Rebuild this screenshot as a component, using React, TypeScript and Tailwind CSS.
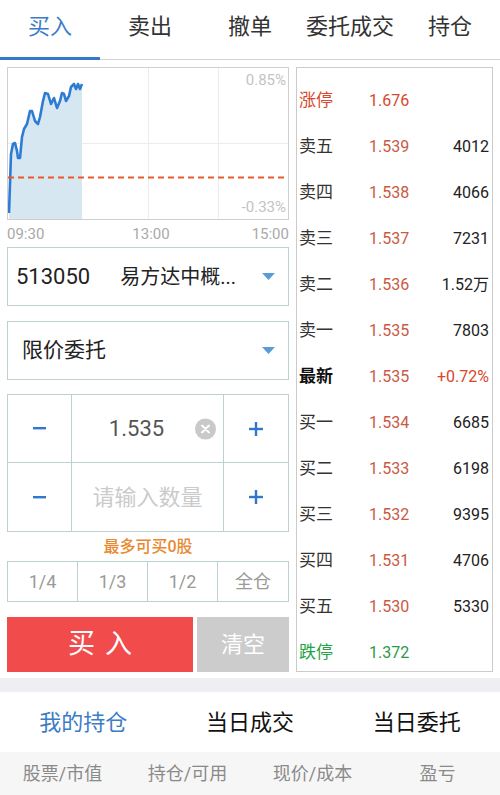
import React from "react";

const FONT = "font-['Roboto','Noto_Sans_CJK_SC',sans-serif]";

const tabs = ["买入", "卖出", "撤单", "委托成交", "持仓"];

const book = [
  { label: "涨停", price: "1.676", qty: "", kind: "up" },
  { label: "卖五", price: "1.539", qty: "4012" },
  { label: "卖四", price: "1.538", qty: "4066" },
  { label: "卖三", price: "1.537", qty: "7231" },
  { label: "卖二", price: "1.536", qty: "1.52万" },
  { label: "卖一", price: "1.535", qty: "7803" },
  { label: "最新", price: "1.535", qty: "+0.72%", kind: "last" },
  { label: "买一", price: "1.534", qty: "6685" },
  { label: "买二", price: "1.533", qty: "6198" },
  { label: "买三", price: "1.532", qty: "9395" },
  { label: "买四", price: "1.531", qty: "4706" },
  { label: "买五", price: "1.530", qty: "5330" },
  { label: "跌停", price: "1.372", qty: "", kind: "down" },
];

// intraday line, page coords relative to chart box origin (7,67)
const pts: [number, number][] = [
  [8, 212], [9, 183], [10, 153], [12, 143], [14, 142], [16, 150], [17, 157], [19, 157],
  [21, 136], [23, 128], [26, 123], [29, 110], [31, 110], [34, 120], [37, 123], [39, 116],
  [42, 100], [44, 92], [47, 93], [50, 103], [53, 97], [56, 107], [59, 100], [61, 92],
  [63, 93], [65, 100], [68, 95], [70, 86], [73, 83], [75, 88], [77, 83], [79, 88], [81, 83],
];

function Chart() {
  const line = pts.map(([x, y], i) => `${i ? "L" : "M"}${x - 7} ${y - 67}`).join(" ");
  const area = `${line} L${81 - 7} 152 L1 152 Z`;
  return (
    <div className="relative h-[153px] border border-[#cfcfcf]">
      <svg className="absolute inset-0" width="280" height="151" viewBox="0 0 280 151">
        <line x1="140.5" y1="0" x2="140.5" y2="151" stroke="#ececec" />
        <line x1="210.5" y1="0" x2="210.5" y2="151" stroke="#ececec" />
        <line x1="0" y1="75.5" x2="280" y2="75.5" stroke="#ececec" />
        <path d={area} fill="#d7e7f2" />
        <path d={line} fill="none" stroke="#2d7bd3" strokeWidth="2.6" strokeLinejoin="round" />
        <line x1="0" y1="109.5" x2="280" y2="109.5" stroke="#e85a2c" strokeWidth="2" strokeDasharray="6 4" />
      </svg>
      <span className="absolute right-[2px] top-[1px] text-[15px] text-[#c3c3c3]">0.85%</span>
      <span className="absolute right-[2px] bottom-[1px] text-[15px] text-[#c3c3c3]">-0.33%</span>
    </div>
  );
}

function Caret() {
  return (
    <svg width="13" height="7" viewBox="0 0 13 7">
      <path d="M0 0 H13 L6.5 7 Z" fill="#5b9bd8" />
    </svg>
  );
}

function Minus() {
  return (
    <svg width="13" height="3" viewBox="0 0 13 3">
      <rect width="13" height="2.4" fill="#2e78cf" />
    </svg>
  );
}

function Plus() {
  return (
    <svg width="14" height="14" viewBox="0 0 14 14">
      <rect x="0" y="5.8" width="14" height="2.4" fill="#2e78cf" />
      <rect x="5.8" y="0" width="2.4" height="14" fill="#2e78cf" />
    </svg>
  );
}

export default function App() {
  return (
    <div className={`w-[500px] h-[795px] overflow-hidden bg-white ${FONT}`}>
      {/* Top tabs */}
      <div className="flex h-[60px] border-b border-[#d2d2d2]">
        {tabs.map((t, i) => (
          <div key={t} className="relative w-[100px] pt-[12px] text-center">
            <span className={`text-[22px] leading-[30px] ${i === 0 ? "text-[#3a7cc6]" : "text-[#333]"}`}>{t}</span>
            {i === 0 && <div className="absolute left-0 right-0 bottom-[-1px] h-[3px] bg-[#3577c8]" />}
          </div>
        ))}
      </div>

      <div className="flex gap-[7px] px-[7px] pt-[7px]">
        {/* Left column */}
        <div className="flex w-[282px] flex-col">
          <Chart />
          <div className="flex h-[26px] items-center justify-between pt-[2px] text-[15px] text-[#a9a9a9]">
            <span>09:30</span>
            <span className="pl-[6px]">13:00</span>
            <span>15:00</span>
          </div>

          <div className="mt-[1px] flex h-[59px] items-center border border-[#bfd0d3] pl-[8px] pr-[13px]">
            <span className="text-[22px] text-[#222]">513050</span>
            <span className="ml-[30px] flex-1 text-[20px] text-[#222]">易方达中概...</span>
            <Caret />
          </div>

          <div className="mt-[15px] flex h-[59px] items-center justify-between border border-[#bfd0d3] pl-[14px] pr-[13px]">
            <span className="text-[21px] text-[#222]">限价委托</span>
            <Caret />
          </div>

          <div className="mt-[14px] grid h-[138px] grid-cols-[64px_1fr_64px] grid-rows-2 border border-[#bfd0d3]">
            <div className="flex items-center justify-center border-r border-b border-[#bfd0d3]"><Minus /></div>
            <div className="relative flex items-center justify-center border-r border-b border-[#bfd0d3]">
              <span className="mr-[22px] text-[22px] text-[#555]">1.535</span>
              <span className="absolute right-[7px] top-1/2 flex h-[21px] w-[21px] -translate-y-1/2 items-center justify-center rounded-full bg-[#c9c9c9]">
                <svg width="9" height="9" viewBox="0 0 9 9">
                  <path d="M1 1 L8 8 M8 1 L1 8" stroke="#fff" strokeWidth="2" strokeLinecap="round" />
                </svg>
              </span>
            </div>
            <div className="flex items-center justify-center border-b border-[#bfd0d3]"><Plus /></div>
            <div className="flex items-center justify-center border-r border-[#bfd0d3]"><Minus /></div>
            <div className="flex items-center justify-center border-r border-[#bfd0d3] text-[22px] text-[#cbcbcb]">请输入数量</div>
            <div className="flex items-center justify-center"><Plus /></div>
          </div>

          <div className="flex h-[29px] items-center justify-center text-[16px] font-medium text-[#e8892f]">最多可买0股</div>

          <div className="grid h-[41px] grid-cols-4 border border-[#bfd0d3] text-[18px] text-[#9a9a9a]">
            {["1/4", "1/3", "1/2", "全仓"].map((f, i) => (
              <div key={f} className={`flex items-center justify-center ${i < 3 ? "border-r border-[#bfd0d3]" : ""}`}>{f}</div>
            ))}
          </div>

          <div className="mt-[15px] flex h-[55px] gap-[4px]">
            <button className="flex w-[186px] items-center justify-center bg-[#f24b4b] pl-[10px] text-[27px] tracking-[10px] text-white">买入</button>
            <button className="flex flex-1 items-center justify-center bg-[#cccccc] text-[22px] text-white">清空</button>
          </div>
        </div>

        {/* Order book */}
        <div className="h-[605px] w-[197px] overflow-hidden border border-[#cbcbcb] pt-[10px]">
          {book.map((r) => {
            const labelCls =
              r.kind === "up" ? "text-[#d8462c]" : r.kind === "down" ? "text-[#22a446]" : r.kind === "last" ? "font-bold text-[#111]" : "text-[#333]";
            const priceCls = r.kind === "up" ? "text-[#d24a2e]" : r.kind === "down" ? "text-[#2a9a48]" : "text-[#c95a44]";
            const qtyCls = r.kind === "last" ? "text-[#d8462c]" : "text-[#222]";
            return (
              <div key={r.label} className="flex h-[46px] items-center pl-[2px] pr-[3px]">
                <span className={`w-[70px] text-[17px] ${labelCls}`}>{r.label}</span>
                <span className={`w-[60px] text-[16px] ${priceCls}`}>{r.price}</span>
                <span className={`flex-1 text-right text-[16px] ${qtyCls}`}>{r.qty}</span>
              </div>
            );
          })}
        </div>
      </div>

      <div className="mt-[6px] h-[14px] bg-[#efeff3]" />

      <div className="grid h-[60px] grid-cols-3 items-center text-center text-[22px]">
        <span className="text-[#3a7cc6]">我的持仓</span>
        <span className="text-[#111]">当日成交</span>
        <span className="text-[#111]">当日委托</span>
      </div>

      <div className="grid h-[43px] grid-cols-4 items-center bg-[#f6f6f6] text-center text-[18px] text-[#8a8a8a]">
        <span>股票/市值</span>
        <span>持仓/可用</span>
        <span>现价/成本</span>
        <span>盈亏</span>
      </div>
    </div>
  );
}
